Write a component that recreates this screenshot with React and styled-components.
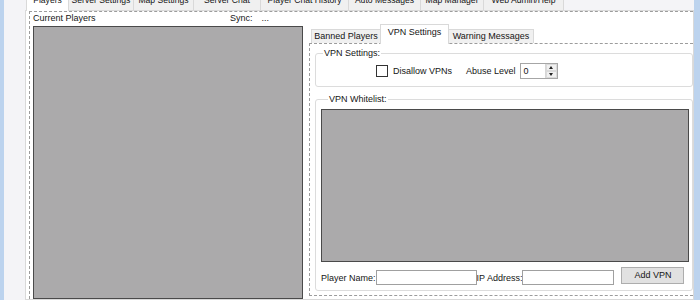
import React from 'react';
import styled, { createGlobalStyle } from 'styled-components';

const Global = createGlobalStyle`
  html, body { margin: 0; padding: 0; }
  body {
    width: 700px; height: 300px; overflow: hidden;
    font-family: "Liberation Sans", Arial, sans-serif;
    font-size: 9px; color: #151515; background: #f4f4f7;
  }
  * { box-sizing: border-box; }
`;

const Window = styled.div`
  display: flex; width: 700px; height: 300px; overflow: hidden;
`;
const Frame = styled.div`
  flex: 0 0 ${p => p.$w}px;
  background: #bcd3ee;
`;
const Client = styled.div`
  flex: 1; min-width: 0;
  background: #f4f4f7;
  padding-left: 21px;
  display: flex; flex-direction: column;
  overflow: hidden;
`;
const TabStrip = styled.div`
  display: flex; align-items: flex-end;
  height: ${p => p.$h}px;
  margin-top: ${p => p.$mt}px;
  padding-left: ${p => p.$pl}px;
  flex: 0 0 auto;
`;
const Tab = styled.div`
  position: relative;
  width: ${p => p.$w}px;
  height: ${p => p.$h}px;
  margin-left: -1px;
  margin-bottom: ${p => (p.$active ? -1 : 0)}px;
  z-index: ${p => (p.$active ? 2 : 1)};
  border: 1px solid #d9d9d9;
  border-bottom: none;
  background: ${p => (p.$active ? '#ffffff' : '#f0f0f0')};
  text-align: center;
  line-height: 11px;
  padding-top: ${p => p.$pt}px;
  white-space: nowrap;
  font-size: ${p => p.$fs || 9}px;
  &:first-child { margin-left: 0; }
`;
const Page = styled.div`
  flex: 1; min-height: 0;
  background: #ffffff;
  border: 1px solid #d9d9d9;
  padding-left: 3px;
  display: flex; flex-direction: column;
`;
const DashedArea = styled.div`
  flex: 1;
  border: 1px dashed #9c9c9c;
  border-right: none; border-bottom: none;
  display: grid;
  grid-template-columns: 270px 1fr;
  column-gap: 6px;
  padding-left: 3px;
`;
const LeftColumn = styled.div`
  display: flex; flex-direction: column;
`;
const Header = styled.div`
  display: flex; height: 14px; padding-top: 1px; line-height: 11px;
`;
const HeaderTitle = styled.span`
  width: 197px;
`;
const SyncValue = styled.span`
  margin-left: 9px;
`;
const GrayList = styled.div`
  background: #abaaab;
  border: 1px solid #4a4a4a;
  flex: ${p => (p.$grow ? 1 : '0 0 auto')};
  height: ${p => (p.$h ? `${p.$h}px` : 'auto')};
  margin: ${p => p.$m || '0'};
`;
const RightColumn = styled.div`
  display: flex; flex-direction: column;
  padding-top: 12px;
`;
const InnerPage = styled.div`
  border: 1px dashed #9c9c9c;
  border-right: none;
  padding: 4px 0 4px 5px;
  display: flex; flex-direction: column;
`;
const GroupBox = styled.fieldset`
  margin: ${p => p.$m || '0'};
  padding: ${p => p.$pad};
  border: 1px solid #dcdcdc;
  border-radius: 3px;
  min-width: 0;
`;
const Legend = styled.legend`
  margin-left: 7px;
  padding: 0 1px;
  line-height: 11px;
`;
const SettingsRow = styled.div`
  display: flex; align-items: center;
  height: 19px;
  margin-top: 2px;
  padding-left: 60px;
`;
const CheckBox = styled.span`
  width: 12px; height: 12px;
  border: 1px solid #333;
  background: #fff;
  margin-right: 5px;
`;
const Label = styled.span`
  margin-right: ${p => p.$mr || 0}px;
  line-height: 12px;
  margin-top: ${p => p.$mt || 0}px;
  white-space: nowrap;
`;
const Numeric = styled.div`
  width: 38px; height: 16px;
  border: 1px solid #a6a6a6;
  background: #fff;
  display: flex; align-items: center;
  padding-left: 3px;
  line-height: 12px;
`;
const NumericValue = styled.span`flex: 1;`;
const Spinner = styled.div`
  width: 12px; height: 14px;
  display: flex; flex-direction: column;
  border-left: 1px solid #d6d6d6;
`;
const SpinBtn = styled.div`
  flex: 1;
  background: #f0f0f0;
  border: 1px solid #dadada;
  display: flex; align-items: center; justify-content: center;
  &::after {
    content: '';
    border-left: 2.5px solid transparent;
    border-right: 2.5px solid transparent;
    ${p => (p.$up ? 'border-bottom: 3px solid #222;' : 'border-top: 3px solid #222;')}
  }
`;
const BottomRow = styled.div`
  display: flex; align-items: flex-start;
  margin-top: 5px;
`;
const TextInput = styled.div`
  width: ${p => p.$w}px; height: 15px;
  margin-top: 3px;
  margin-right: ${p => p.$mr || 0}px;
  border: 1px solid #a0a0a0;
  background: #fff;
`;
const Button = styled.div`
  width: 63px; height: 17px;
  background: #e1e1e1;
  border: 1px solid #adadad;
  text-align: center;
  line-height: 14px;
`;

const topTabs = [
  ['Players', 43],
  ['Server Settings', 66],
  ['Map Settings', 61],
  ['Server Chat', 68],
  ['Player Chat History', 89],
  ['Auto Messages', 73],
  ['Map Manager', 64],
  ['Web Admin/Help', 81],
];

const innerTabs = [
  ['Banned Players', 70, 14, false],
  ['VPN Settings', 69, 19, true],
  ['Warning Messages', 86, 14, false],
];

export default function App() {
  return (
    <>
      <Global />
      <Window>
        <Frame $w={4} />
        <Client>
          <TabStrip $h={16} $mt={-6} $pl={1}>
            {topTabs.map(([t, w], i) => (
              <Tab key={t} $w={w} $h={i === 0 ? 17 : 16} $pt={0} $fs={8.6} $active={i === 0}>
                {t}
              </Tab>
            ))}
          </TabStrip>
          <Page>
            <DashedArea>
              <LeftColumn>
                <Header>
                  <HeaderTitle>Current Players</HeaderTitle>
                  <span>Sync:</span>
                  <SyncValue>...</SyncValue>
                </Header>
                <GrayList $grow />
              </LeftColumn>
              <RightColumn>
                <TabStrip $h={19} $mt={0} $pl={2}>
                  {innerTabs.map(([t, w, h, a]) => (
                    <Tab key={t} $w={w} $h={a ? 20 : h} $pt={a ? 2 : 1} $active={a}>
                      {t}
                    </Tab>
                  ))}
                </TabStrip>
                <InnerPage>
                  <GroupBox $pad="0 0 6px 0">
                    <Legend>VPN Settings:</Legend>
                    <SettingsRow>
                      <CheckBox />
                      <Label $mr={14}>Disallow VPNs</Label>
                      <Label $mr={4}>Abuse Level</Label>
                      <Numeric>
                        <NumericValue>0</NumericValue>
                        <Spinner>
                          <SpinBtn $up />
                          <SpinBtn />
                        </Spinner>
                      </Numeric>
                    </SettingsRow>
                  </GroupBox>
                  <GroupBox $m="7px 0 0 0" $pad="0 3px 5px 5px">
                    <Legend>VPN Whitelist:</Legend>
                    <GrayList $h={153} $m="4px 0 0 0" />
                    <BottomRow>
                      <Label $mt={5}>Player Name:</Label>
                      <TextInput $w={101} />
                      <Label $mt={5}>IP Address:</Label>
                      <TextInput $w={92} $mr={7} />
                      <Button>Add VPN</Button>
                    </BottomRow>
                  </GroupBox>
                </InnerPage>
              </RightColumn>
            </DashedArea>
          </Page>
        </Client>
        <Frame $w={6} />
      </Window>
    </>
  );
}
